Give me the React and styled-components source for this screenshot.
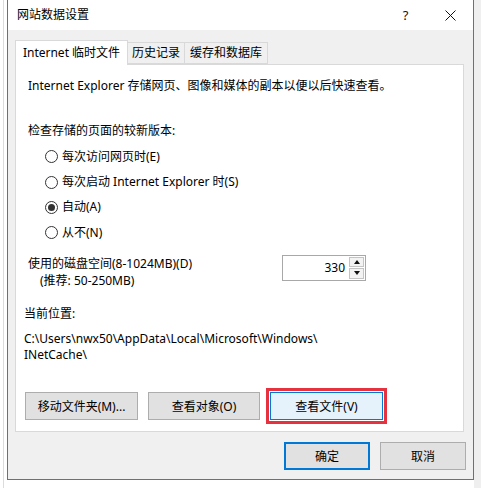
import React from 'react';
import styled, { createGlobalStyle } from 'styled-components';

const GlobalStyle = createGlobalStyle`
  html, body {
    margin: 0;
    padding: 0;
    background: #fff;
  }
  body {
    font-family: "Noto Sans", "Noto Sans CJK SC", sans-serif;
    font-size: 12px;
    color: #000;
  }
`;

const Desktop = styled.div`
  width: 481px;
  height: 488px;
  overflow: hidden;
  background: linear-gradient(
    to right,
    #fff 3px,
    #dcdcdc 3px,
    #dcdcdc 4px,
    #fff 4px,
    #fff 474px,
    #efefef 474px
  );
`;

const Window = styled.div`
  margin-left: 7px;
  width: 467px;
  height: 480px;
  box-sizing: border-box;
  border: 1px solid #707070;
  border-top: none;
  background: #f0f0f0;
  display: flex;
  flex-direction: column;
`;

const TitleBar = styled.div`
  height: 30px;
  flex: none;
  background: #fff;
  display: flex;
  align-items: center;
`;

const Title = styled.div`
  flex: 1;
  padding-left: 9px;
  font-size: 12px;
  line-height: 16px;
`;

const CaptionButton = styled.div`
  width: 45px;
  height: 30px;
  display: flex;
  align-items: center;
  justify-content: center;
  font-size: 13px;
  color: #111;
`;

const Body = styled.div`
  padding: 10px 9px 0 7px;
`;

const TabRow = styled.div`
  display: flex;
  align-items: flex-end;
  margin-bottom: -1px;
  position: relative;
  z-index: 1;
`;

const Tab = styled.div`
  box-sizing: border-box;
  height: ${p => (p.$active ? '25px' : '22px')};
  margin-left: ${p => (p.$first ? '0' : '-1px')};
  margin-bottom: ${p => (p.$active ? '0' : '1px')};
  width: ${p => p.$width}px;
  display: flex;
  align-items: center;
  justify-content: center;
  border: 1px solid #d9d9d9;
  border-bottom: ${p => (p.$active ? 'none' : '1px solid #d9d9d9')};
  background: ${p => (p.$active ? '#fff' : '#f0f0f0')};
  padding-bottom: ${p => (p.$active ? '1px' : '0')};
  white-space: nowrap;
  line-height: 16px;
  position: relative;
  z-index: ${p => (p.$active ? 2 : 1)};
`;

const Panel = styled.div`
  box-sizing: border-box;
  height: 368px;
  border: 1px solid #d9d9d9;
  background: #fff;
  padding: 13px 0 0 12px;
  display: flex;
  flex-direction: column;
`;

const Text = styled.div`
  line-height: ${p => p.$lh || 16}px;
  margin-top: ${p => p.$mt || 0}px;
  margin-left: ${p => p.$ml || 0}px;
  white-space: nowrap;
`;

const RadioList = styled.div`
  margin-top: 5px;
  padding-left: 17px;
  display: flex;
  flex-direction: column;
`;

const RadioRow = styled.label`
  height: 25.4px;
  display: flex;
  align-items: center;
  gap: 4px;
  line-height: 16px;
`;

const RadioCircle = styled.span`
  width: 13px;
  height: 13px;
  box-sizing: border-box;
  border: 1px solid #333;
  border-radius: 50%;
  background: #fff;
  display: flex;
  align-items: center;
  justify-content: center;

  &::after {
    content: '';
    width: 7px;
    height: 7px;
    border-radius: 50%;
    background: ${p => (p.$checked ? '#333' : 'transparent')};
  }
`;

const DiskRow = styled.div`
  margin-top: 9px;
  display: grid;
  grid-template-columns: 254px 84px;
  align-items: start;
`;

const SpinBox = styled.div`
  box-sizing: border-box;
  height: 26px;
  border: 1px solid #a8a8a8;
  background: #fff;
  display: flex;
  align-items: stretch;
`;

const SpinValue = styled.div`
  flex: 1;
  text-align: right;
  padding-right: 4px;
  line-height: 24px;
`;

const SpinArrows = styled.div`
  width: 15px;
  padding: 1px 1px 1px 0;
  display: flex;
  flex-direction: column;
  gap: 1px;
`;

const SpinArrow = styled.div`
  flex: 1;
  box-sizing: border-box;
  border: 1px solid #c4c4c4;
  background: #f3f3f3;
  display: flex;
  align-items: center;
  justify-content: center;

  &::after {
    content: '';
    width: 0;
    height: 0;
    border-left: 3px solid transparent;
    border-right: 3px solid transparent;
    ${p => (p.$up ? 'border-bottom: 4px solid #111;' : 'border-top: 4px solid #111;')}
  }
`;

const ButtonRow = styled.div`
  margin-top: 29px;
  margin-left: -3px;
  display: flex;
  gap: 10px;
`;

const Button = styled.button`
  box-sizing: border-box;
  width: ${p => p.$width || 86}px;
  height: 28px;
  padding: 0;
  font-family: inherit;
  font-size: 12px;
  color: #000;
  background: ${p => (p.$hot ? '#e5f1fb' : '#e1e1e1')};
  border: ${p => (p.$default ? '2px solid #0078d7' : p.$hot ? '1px solid #0078d7' : '1px solid #adadad')};
  outline: ${p => (p.$marked ? '3px solid #e5323e' : 'none')};
  outline-offset: 1px;
`;

const Footer = styled.div`
  display: flex;
  justify-content: flex-end;
  gap: 10px;
  padding: 10px 7px 0 0;
`;

const CloseIcon = () => (
  <svg width="11" height="11" viewBox="0 0 11 11">
    <path d="M0.5 0.5 L10.5 10.5 M10.5 0.5 L0.5 10.5" stroke="#111" strokeWidth="1" fill="none" />
  </svg>
);

const options = [
  { label: '每次访问网页时(E)', checked: false },
  { label: '每次启动 Internet Explorer 时(S)', checked: false },
  { label: '自动(A)', checked: true },
  { label: '从不(N)', checked: false },
];

const tabs = [
  { label: 'Internet 临时文件', width: 113, active: true },
  { label: '历史记录', width: 58 },
  { label: '缓存和数据库', width: 84 },
];

export default function App() {
  return (
    <Desktop>
      <GlobalStyle />
      <Window>
        <TitleBar>
          <Title>网站数据设置</Title>
          <CaptionButton>?</CaptionButton>
          <CaptionButton><CloseIcon /></CaptionButton>
        </TitleBar>
        <Body>
          <TabRow>
            {tabs.map((t, i) => (
              <Tab key={t.label} $active={t.active} $first={i === 0} $width={t.width}>
                {t.label}
              </Tab>
            ))}
          </TabRow>
          <Panel>
            <Text>Internet Explorer 存储网页、图像和媒体的副本以便以后快速查看。</Text>
            <Text $mt={29}>检查存储的页面的较新版本:</Text>
            <RadioList>
              {options.map(o => (
                <RadioRow key={o.label}>
                  <RadioCircle $checked={o.checked} />
                  {o.label}
                </RadioRow>
              ))}
            </RadioList>
            <DiskRow>
              <div>
                <Text $lh={17}>使用的磁盘空间(8-1024MB)(D)</Text>
                <Text $lh={17} $ml={12}>(推荐: 50-250MB)</Text>
              </div>
              <SpinBox>
                <SpinValue>330</SpinValue>
                <SpinArrows>
                  <SpinArrow $up />
                  <SpinArrow />
                </SpinArrows>
              </SpinBox>
            </DiskRow>
            <Text $mt={17} $ml={-4}>当前位置:</Text>
            <Text $mt={9} $ml={-4}>
              C:\Users\nwx50\AppData\Local\Microsoft\Windows\<br />INetCache\
            </Text>
            <ButtonRow>
              <Button $width={113}>移动文件夹(M)...</Button>
              <Button $width={112}>查看对象(O)</Button>
              <Button $width={113} $hot $marked>查看文件(V)</Button>
            </ButtonRow>
          </Panel>
        </Body>
        <Footer>
          <Button $default>确定</Button>
          <Button>取消</Button>
        </Footer>
      </Window>
    </Desktop>
  );
}
